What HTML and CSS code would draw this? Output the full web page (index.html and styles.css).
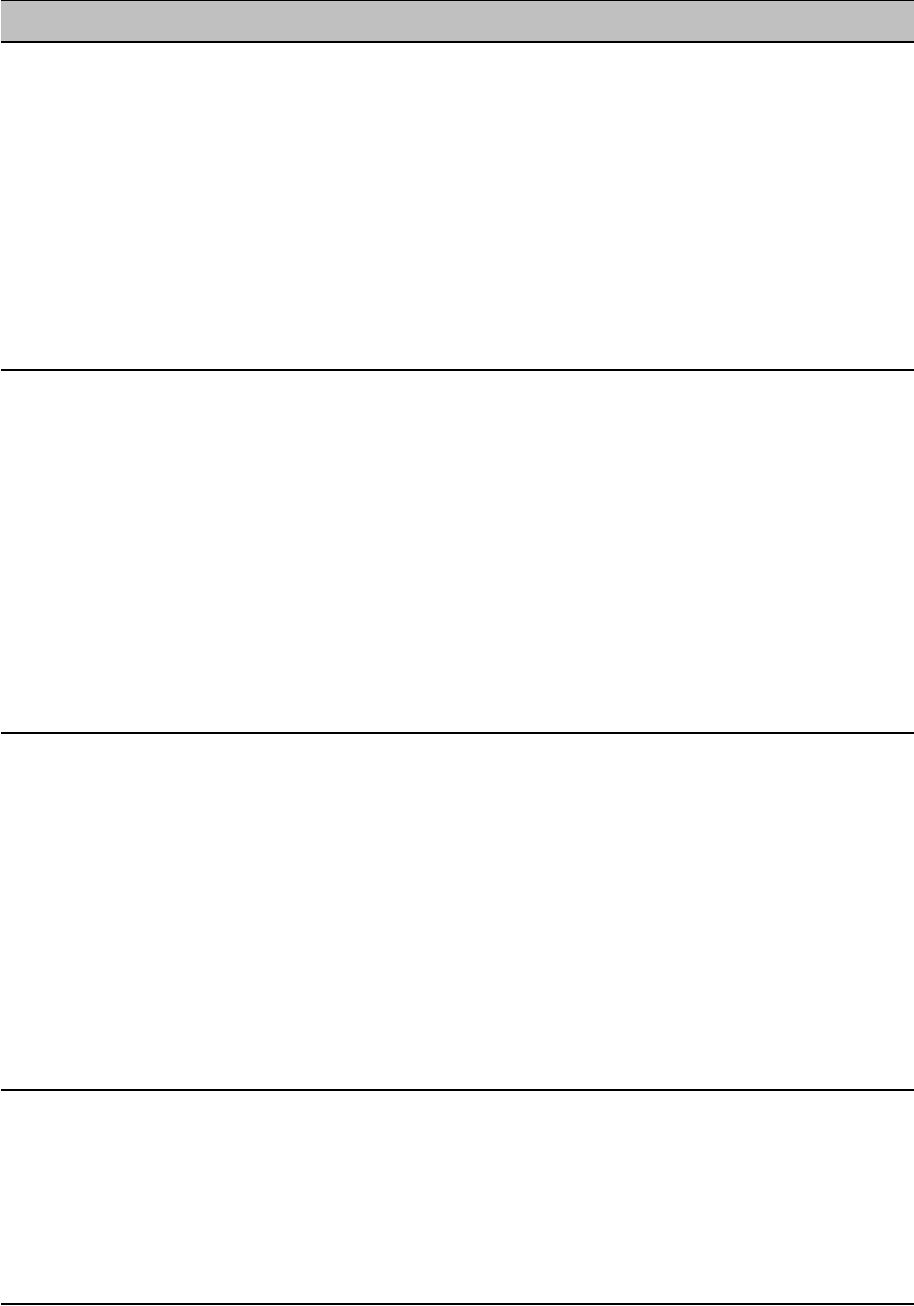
FILE: index.html
```html
<!DOCTYPE html>
<html lang="en">
<head>
    <meta charset="UTF-8">
    <meta name="viewport" content="width=device-width, initial-scale=1.0">
    <title>Table</title>
    <link rel="stylesheet" href="styles.css">
</head>
<body>
    <div class="sheet">
        <div class="sheet-head"></div>
        <div class="sheet-row row-1"></div>
        <div class="sheet-row row-2"></div>
        <div class="sheet-row row-3"></div>
        <div class="sheet-row row-4"></div>
    </div>
</body>
</html>
```
FILE: styles.css
```css
body {
    margin: 0;
    padding: 0 0 0 1px;
    background-color: #fff;
    font-family: "Liberation Sans", Arial, sans-serif;
}
.sheet {
    display: flex;
    flex-direction: column;
}
.sheet-head {
    height: 40px;
    background-color: #c0c0c0;
    border-top: 1px solid #000;
    border-bottom: 2px solid #000;
}
.sheet-row {
    border-bottom: 2px solid #000;
}
.row-1 {
    height: 326px;
}
.row-2 {
    height: 361px;
}
.row-3 {
    height: 355px;
}
.row-4 {
    height: 212px;
}
```
